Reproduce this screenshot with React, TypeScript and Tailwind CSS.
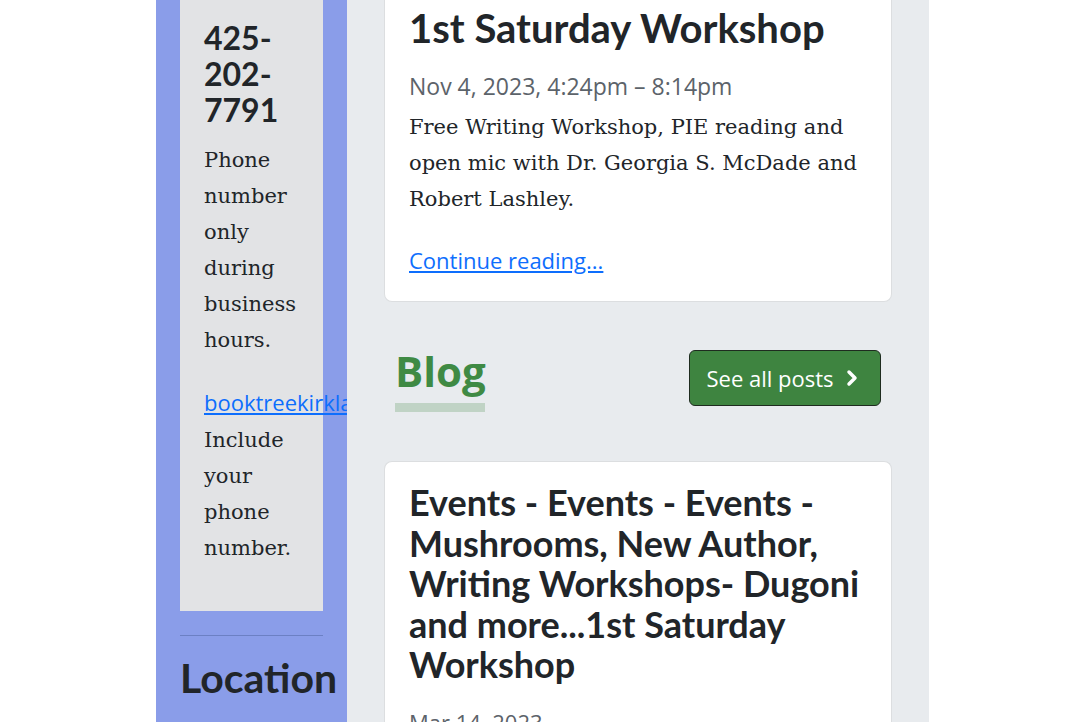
import { ChevronRight } from "lucide-react"

const sans = "font-['Lato','Open_Sans',sans-serif]"
const ui = "font-['Open_Sans','Noto_Sans',sans-serif]"
const serif = "font-['DejaVu_Serif','Liberation_Serif',serif]"

function Sidebar() {
  return (
    <aside className="w-[191px] shrink-0 bg-[#8a9de9] pl-6 pr-6">
      <div className="h-[611px] w-[143px] bg-[#e2e3e5] px-6 pt-[20px]">
        <h3 className={`${sans} text-[32px] font-bold leading-[36px] text-[#212529]`}>
          425-
          <br />
          202-
          <br />
          7791
        </h3>
        <p className={`${serif} mt-[14px] text-[21px] leading-[36px] text-[#212529]`}>
          Phone number only during business hours.
        </p>
        <p className={`${serif} mt-[26px] text-[21px] leading-[36px] text-[#212529]`}>
          <a href="#" className={`${ui} whitespace-nowrap text-[22px] text-[#0d6efd] underline`}>
            booktreekirkland@gmail.com
          </a>
          <br />
          Include your phone number.
        </p>
      </div>
      <hr className="mt-6 w-[143px] border-t border-[#6c80c4]" />
      <h2 className={`${sans} mt-[18px] whitespace-nowrap text-[41px] font-bold leading-[48px] text-[#212529]`}>
        Location
      </h2>
    </aside>
  )
}

function Main() {
  return (
    <main className="flex-1 bg-[#e8ebee] pl-[37px] pr-[37px]">
      <article className="rounded-b-lg border border-t-0 border-[#dcdee0] bg-white px-6 pb-[26px] pt-[4px]">
        <h2 className={`${sans} text-[40px] font-bold leading-[48px] text-[#212529]`}>1st Saturday Workshop</h2>
        <p className={`${ui} mt-[19px] text-[23px] leading-[30px] text-[#5c636a]`}>
          Nov 4, 2023, 4:24pm – 8:14pm
        </p>
        <p className={`${serif} mt-[8px] text-[21px] leading-[36px] text-[#212529]`}>
          Free Writing Workshop, PIE reading and open mic with Dr. Georgia S. McDade and Robert Lashley.
        </p>
        <a href="#" className={`${ui} mt-[28px] block text-[22px] leading-[30px] text-[#0d6efd] underline`}>
          Continue reading...
        </a>
      </article>

      <div className="flex items-start justify-between px-[11px] pt-[47px]">
        <div>
          <h2 className={`${ui} text-[42px] font-bold leading-[44px] text-[#3f8a44]`}>Blog</h2>
          <div className="mt-[10px] h-[9px] w-[90px] bg-[#c0d3c5]" />
        </div>
        <a
          href="#"
          className={`${ui} mt-[1px] flex h-[56px] w-[192px] items-center justify-center gap-[6px] rounded-md border border-[#1e2b1f] bg-[#3e8440] text-[22px] text-white`}
        >
          See all posts
          <ChevronRight className="h-6 w-6" strokeWidth={3.5} />
        </a>
      </div>

      <article className="mt-[49px] rounded-t-lg border border-b-0 border-[#dcdee0] bg-white px-6 pt-[20px]">
        <h2 className={`${sans} text-[36px] font-bold leading-[40.5px] text-[#212529]`}>
          Events - Events - Events - Mushrooms, New Author, Writing Workshops- Dugoni and more...1st Saturday Workshop
        </h2>
        <p className={`${ui} mt-[22px] text-[22px] leading-[30px] text-[#5c636a]`}>Mar 14, 2023</p>
      </article>
    </main>
  )
}

export default function App() {
  return (
    <div className="h-[722px] w-[1083px] overflow-hidden bg-white">
      <div className="ml-[156px] flex h-[722px] w-[773px] overflow-hidden">
        <Sidebar />
        <Main />
      </div>
    </div>
  )
}
